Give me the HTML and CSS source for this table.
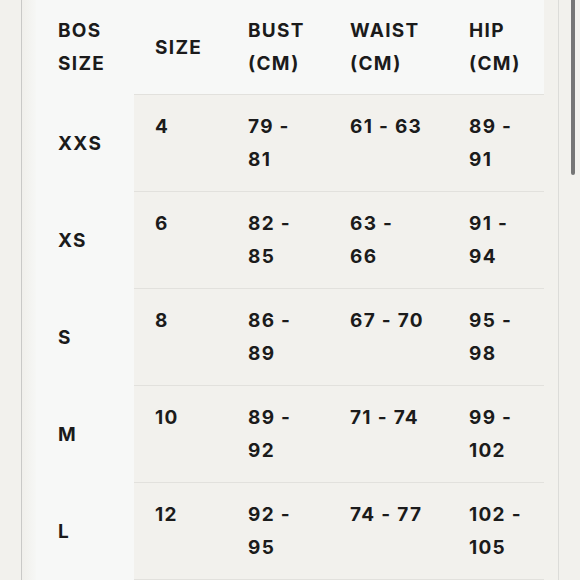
FILE: index.html
```html
<!DOCTYPE html>
<html>
<head>
<meta charset="utf-8">
<link rel="stylesheet" href="styles.css">
</head>
<body>
<div class="page">
  <div class="gutter"></div>
  <div class="panel">
    <table class="chart">
      <colgroup>
        <col class="c1"><col class="c2"><col class="c3"><col class="c4"><col class="c5">
      </colgroup>
      <thead>
        <tr>
          <th>BOS<br>SIZE</th>
          <th>SIZE</th>
          <th>BUST<br>(CM)</th>
          <th>WAIST<br>(CM)</th>
          <th>HIP<br>(CM)</th>
        </tr>
      </thead>
      <tbody>
        <tr><th>XXS</th><td>4</td><td>79 -<br>81</td><td>61 - 63</td><td>89 -<br>91</td></tr>
        <tr><th>XS</th><td>6</td><td>82 -<br>85</td><td>63 -<br>66</td><td>91 -<br>94</td></tr>
        <tr><th>S</th><td>8</td><td>86 -<br>89</td><td>67 - 70</td><td>95 -<br>98</td></tr>
        <tr><th>M</th><td>10</td><td>89 -<br>92</td><td>71 - 74</td><td>99 -<br>102</td></tr>
        <tr><th>L</th><td>12</td><td>92 -<br>95</td><td>74 - 77</td><td>102 -<br>105</td></tr>
      </tbody>
    </table>
  </div>
  <div class="rail"></div>
</div>
<div class="scrollbar"></div>
</body>
</html>
```
FILE: styles.css
```css
html, body {
  margin: 0;
  padding: 0;
  height: 100%;
  overflow: hidden;
  background: #f2f1ed;
}
body {
  font-family: Inter, "Noto Sans", sans-serif;
  color: #1b1b1b;
}
.page {
  display: flex;
  height: 580px;
}
.gutter {
  width: 21px;
  flex: none;
  border-right: 1px solid #c9c9c7;
}
.panel {
  flex: none;
  padding-left: 14px;
  background: linear-gradient(to right, #f0efeb 0, #f6f7f5 14px, #f7f8f7 14px);
  background-repeat: no-repeat;
}
.chart {
  border-collapse: collapse;
  table-layout: fixed;
  width: 508px;
  font-size: 19px;
  font-weight: 700;
  letter-spacing: 1.3px;
  line-height: 33px;
}
.c1 { width: 98px; }
.c2 { width: 93px; }
.c3 { width: 102px; }
.c4 { width: 119px; }
.c5 { width: 96px; }
.chart th, .chart td {
  text-align: left;
  padding: 15px 0 15px 21px;
  font-weight: 700;
}
.chart thead th {
  background: #f7f8f7;
  vertical-align: middle;
  padding-top: 14px;
  padding-bottom: 14px;
  border-bottom: 1px solid #e2e1dd;
}
.chart thead th:first-child {
  border-bottom-color: #f7f8f7;
}
.chart tr > :first-child {
  padding-left: 22px;
}
.chart tbody th {
  background: #f7f8f7;
  vertical-align: middle;
}
.chart tbody td {
  background: #f2f1ed;
  vertical-align: top;
  border-bottom: 1px solid #e2e1dd;
}
.rail {
  width: 14px;
  flex: none;
  border-right: 1px solid #dcdcd9;
}
.scrollbar {
  position: absolute;
  top: 0;
  left: 571px;
  width: 4px;
  height: 175px;
  border-radius: 0 0 2px 2px;
  background: #767676;
}
```
